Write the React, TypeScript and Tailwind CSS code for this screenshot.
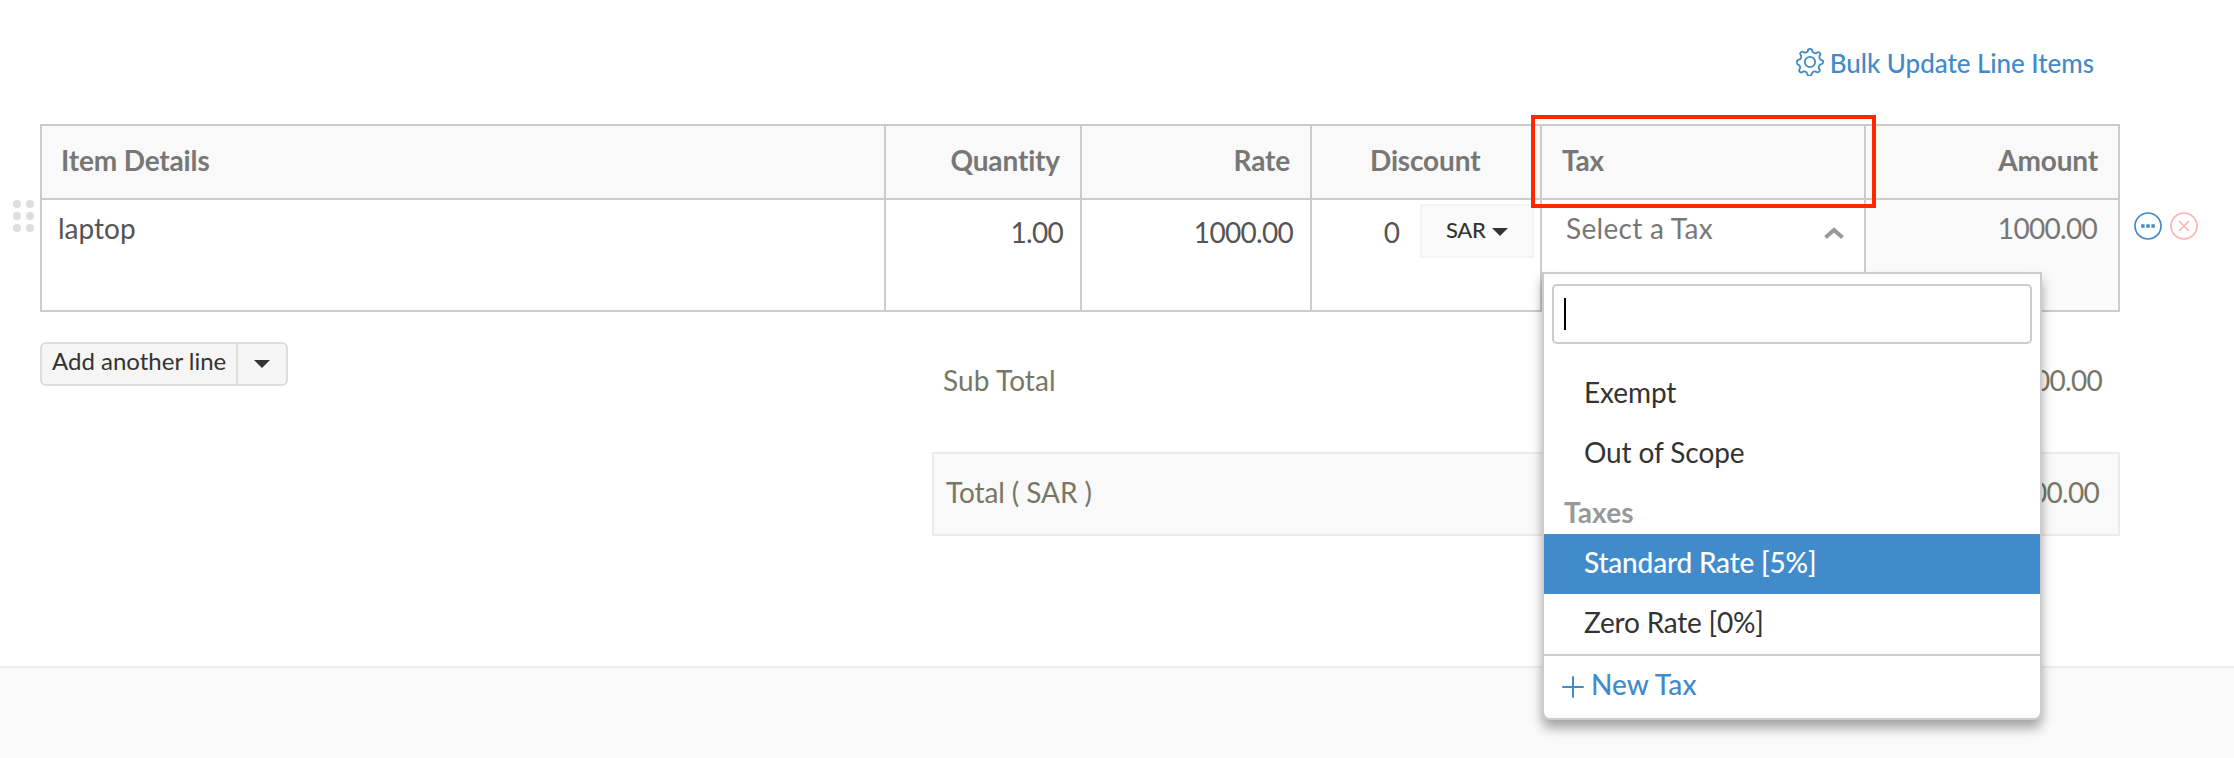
import type { ReactNode } from "react";

interface TaxOption {
  label: string;
  className: string;
  active?: boolean;
}

const exemptions: TaxOption[] = [
  { label: "Exempt", className: "tracking-[-0.1px]" },
  { label: "Out of Scope", className: "tracking-[-0.1px]" },
];

const taxes: TaxOption[] = [
  { label: "Standard Rate [5%]", className: "font-medium tracking-[-0.2px]", active: true },
  { label: "Zero Rate [0%]", className: "tracking-[-0.2px]" },
];

function Caret() {
  return (
    <svg width="16" height="8" viewBox="0 0 16 8" className="fill-[#333]" aria-hidden="true">
      <path d="M0 0h16L8 8z" />
    </svg>
  );
}

function GearIcon() {
  return (
    <svg width="28" height="28" viewBox="0 0 28 28" fill="none" stroke="#428bca" strokeWidth="1.8" strokeLinejoin="round" aria-hidden="true">
      <path d="M11.8 2.6Q12 .9 14 .9t2.2 1.7q.2 1.7 1.9 2.4t3-.4q1.4-1 2.6.2t.3 2.6q-1.1 1.4-.4 3t2.4 1.9Q27.1 12 27.1 14t-1.7 2.2q-1.7.2-2.4 1.9t.4 3q1 1.4-.2 2.6t-2.6.3q-1.4-1.1-3-.4t-1.9 2.4q-.2 1.7-2.2 1.7t-2.2-1.7q-.2-1.7-1.9-2.4t-3 .4q-1.4 1-2.6-.2t-.3-2.6q1.1-1.4.4-3t-2.4-1.9Q.9 16 .9 14t1.7-2.2q1.7-.2 2.4-1.9t-.4-3q-1-1.4.2-2.6t2.6-.3q1.4 1.1 3 .4t1.9-2.4z" />
      <circle cx="14" cy="14" r="5.2" />
    </svg>
  );
}

function DragHandle() {
  return (
    <div className="grid w-[21px] grid-cols-2 gap-x-[5px] gap-y-1">
      {[0, 1, 2, 3, 4, 5].map((dot) => (
        <span key={dot} className="size-2 rounded-full bg-[#ddd]" />
      ))}
    </div>
  );
}

function HeadCell({ className, children }: { className: string; children: ReactNode }) {
  return (
    <div className={`h-[74px] border-b-2 border-[#ccc] bg-[#f9f9f9] font-bold leading-[68px] tracking-[-0.15px] text-[#777] ${className}`}>
      {children}
    </div>
  );
}

function Option({ option }: { option: TaxOption }) {
  return (
    <li
      className={`h-[60px] pl-10 leading-[56px] ${option.active ? "bg-[#428bca] text-white" : "text-[#333]"} ${option.className}`}
    >
      {option.label}
    </li>
  );
}

function TaxDropdown() {
  return (
    <div className="absolute left-0 top-[72px] z-10 h-[448px] w-[500px] rounded-b-lg border-2 border-[#ccc] bg-white shadow-[0_8px_12px_rgba(0,0,0,0.35)]">
      <div className="mx-2 mt-[10px] flex h-[60px] items-start rounded-[5px] border-2 border-[#ccc] pl-[10px] pt-3">
        <span className="h-8 w-[2px] bg-black" />
      </div>
      <ul className="mt-5">
        {exemptions.map((option) => (
          <Option key={option.label} option={option} />
        ))}
      </ul>
      <p className="h-[50px] pl-5 font-bold leading-[56px] tracking-[0.1px] text-[#999]">Taxes</p>
      <ul>
        {taxes.map((option) => (
          <Option key={option.label} option={option} />
        ))}
      </ul>
      <div className="flex border-t-2 border-[#ccc] pl-[18px] font-medium leading-[57px] tracking-[0.1px] text-[#428bca]">
        <svg width="22" height="22" viewBox="0 0 22 22" className="mr-[7px] mt-5" stroke="#428bca" strokeWidth="2" strokeLinecap="round" aria-hidden="true">
          <path d="M11 1v20M1 11h20" />
        </svg>
        New Tax
      </div>
    </div>
  );
}

export default function App() {
  return (
    <div className="flex h-[758px] w-[2234px] flex-col overflow-hidden bg-white font-['Lato',sans-serif] text-[28px] text-[#555] [font-variant-ligatures:none]">
      <div className="flex h-[124px] items-start justify-end gap-[6px] pr-[140px] pt-12 text-[26px] font-medium leading-7 text-[#428bca]">
        <GearIcon />
        <span className="pt-px tracking-[-0.05px]">Bulk Update Line Items</span>
      </div>

      {/* Line items */}
      <div className="flex h-[188px]">
        <div className="w-10 pl-[13px] pt-[76px]">
          <DragHandle />
        </div>

        <div className="grid w-[2080px] grid-cols-[844px_196px_230px_230px_324px_252px] border-2 border-[#ccc]">
          <HeadCell className="border-r-2 pl-[19px]">Item Details</HeadCell>
          <HeadCell className="border-r-2 pr-5 text-right">Quantity</HeadCell>
          <HeadCell className="border-r-2 pr-5 text-right">Rate</HeadCell>
          <HeadCell className="border-r-2 pl-[58px]">Discount</HeadCell>
          <HeadCell className="relative border-r-2 pl-5">
            Tax
            <span className="absolute -left-[11px] -top-[11px] z-20 h-[93px] w-[345px] border-4 border-[#ff2600]" />
          </HeadCell>
          <HeadCell className="pr-5 text-right">Amount</HeadCell>

          <div className="h-[110px] border-r-2 border-[#ccc] pl-4 leading-[56px]">laptop</div>
          <div className="border-r-2 border-[#ccc] pr-[17px] text-right leading-[64px] tracking-[-0.7px]">1.00</div>
          <div className="border-r-2 border-[#ccc] pr-[17px] text-right leading-[64px] tracking-[-0.7px]">1000.00</div>
          <div className="flex items-start justify-end border-r-2 border-[#ccc] pr-[6px] pt-1">
            <span className="mr-5 leading-[56px]">0</span>
            <div className="flex h-[54px] w-[114px] items-start gap-[5px] border-2 border-[#f3f3f3] bg-[#fafafa] pl-6 text-[22px] font-medium leading-[48px] text-[#333]">
              <span className="w-[41px] tracking-[-0.3px]">SAR</span>
              <span className="mt-[22px] flex">
                <Caret />
              </span>
            </div>
          </div>
          <div className="relative flex items-start justify-between border-r-2 border-[#ccc] pl-6 pr-5 leading-[56px] text-[#777]">
            <span className="tracking-[0.3px]">Select a Tax</span>
            <svg width="20" height="12" viewBox="0 0 20 12" className="mt-[27px]" fill="none" stroke="#999" strokeWidth="4" aria-hidden="true">
              <path d="M1.5 10.5 10 3l8.5 7.5" />
            </svg>
            <TaxDropdown />
          </div>
          <div className="bg-[#fafafa] pr-[21px] text-right leading-[56px] tracking-[-0.7px] text-[#777]">1000.00</div>
        </div>

        <div className="flex gap-2 pl-[14px] pt-[88px]">
          <svg width="28" height="28" viewBox="0 0 28 28" aria-hidden="true">
            <circle cx="14" cy="14" r="13" fill="none" stroke="#428bca" strokeWidth="1.7" />
            <path d="M7.2 12.3h3.4v3.4H7.2zM12.3 12.3h3.4v3.4h-3.4zM17.4 12.3h3.4v3.4h-3.4z" fill="#428bca" />
          </svg>
          <svg width="28" height="28" viewBox="0 0 28 28" fill="none" stroke="#ffb3b3" strokeWidth="1.7" aria-hidden="true">
            <circle cx="14" cy="14" r="13" />
            <path d="m9 9 10 10M19 9 9 19" />
          </svg>
        </div>
      </div>

      {/* Add line + totals */}
      <div className="flex h-[354px] items-start justify-between pl-10 pr-[114px]">
        <div className="mt-[30px] flex h-11 w-[248px] rounded-md border-2 border-[#ddd] bg-[#f5f5f5] text-[24px] leading-[34px] text-[#333]">
          <span className="w-[196px] border-r-2 border-[#ddd] pl-[10px]">Add another line</span>
          <span className="ml-4 mt-4 flex">
            <Caret />
          </span>
        </div>

        <div className="w-[1188px] text-[#777766]">
          <div className="mt-10 flex h-[100px] justify-between pl-[11px] pr-[18px] leading-[56px]">
            <span className="tracking-[0.1px]">Sub Total</span>
            <span className="tracking-[-0.7px]">1000.00</span>
          </div>
          <div className="flex h-[84px] justify-between border-2 border-[#ebebeb] bg-[#f9f9f9] pl-3 pr-[19px] leading-[76px]">
            <span className="tracking-[-0.1px]">Total ( SAR )</span>
            <span className="tracking-[-0.7px]">1000.00</span>
          </div>
        </div>
      </div>

      <div className="flex-1 border-t-2 border-[#ececec] bg-[#fafafa]" />
    </div>
  );
}
